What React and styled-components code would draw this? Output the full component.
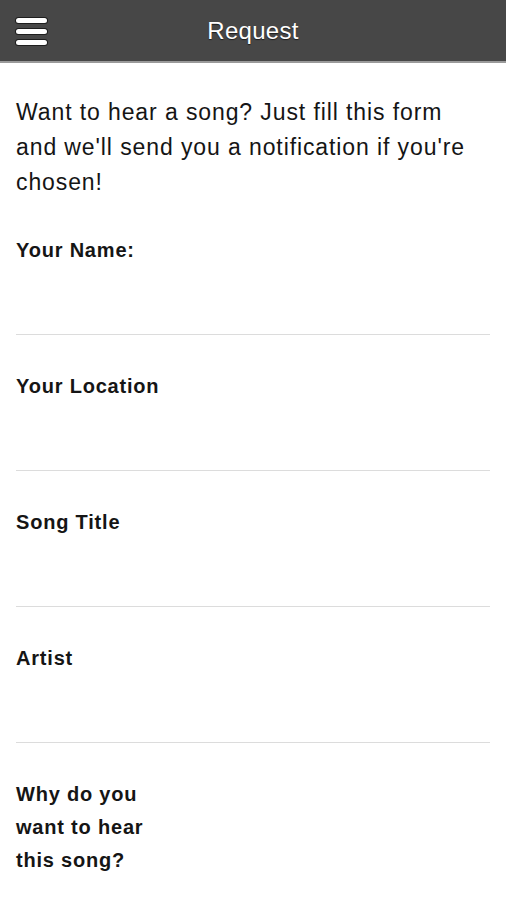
import React from 'react';
import styled, { createGlobalStyle } from 'styled-components';

const GlobalStyle = createGlobalStyle`
  html, body {
    margin: 0;
    padding: 0;
    background: #ffffff;
  }
  body {
    font-family: "Liberation Sans", Arial, sans-serif;
    color: #151515;
  }
`;

const Page = styled.div`
  width: 506px;
  min-height: 900px;
  background: #ffffff;
`;

const Header = styled.header`
  height: 61px;
  background: #474747;
  border-bottom: 2px solid #9a9a9a;
  display: flex;
  align-items: center;
  justify-content: center;
  position: relative;
`;

const MenuButton = styled.button`
  position: absolute;
  left: 16px;
  top: 18px;
  width: 31px;
  height: 27px;
  padding: 0;
  border: none;
  background: transparent;
  display: flex;
  flex-direction: column;
  justify-content: space-between;
`;

const Bar = styled.span`
  display: block;
  height: 5px;
  border-radius: 3px;
  background: #ffffff;
  box-shadow: 0 0 0 1px #1e1e1e;
`;

const Title = styled.h1`
  margin: 0;
  color: #ffffff;
  font-size: 24px;
  font-weight: normal;
  letter-spacing: 0.3px;
  text-shadow: 0 1px 1px rgba(0, 0, 0, 0.6);
`;

const Content = styled.main`
  padding: 32px 16px 0;
`;

const Intro = styled.p`
  margin: 0 0 34px;
  font-size: 23px;
  letter-spacing: 0.9px;
  line-height: 35px;
  color: #151515;
`;

const Field = styled.div`
  border-bottom: 1px solid #dcdcdc;
  margin-bottom: 35px;
`;

const Label = styled.label`
  display: block;
  font-size: 20px;
  font-weight: bold;
  letter-spacing: 0.8px;
  line-height: 33px;
  color: #151515;
  max-width: ${(p) => (p.narrow ? '150px' : 'none')};
`;

const Input = styled.input`
  display: block;
  width: 100%;
  height: 67px;
  border: none;
  outline: none;
  padding: 0;
  background: transparent;
  font-family: inherit;
  font-size: 20px;
`;

const fields = ['Your Name:', 'Your Location', 'Song Title', 'Artist'];

const App = () => {
  return (
    <Page>
      <GlobalStyle />
      <Header>
        <MenuButton aria-label="Menu">
          <Bar />
          <Bar />
          <Bar />
        </MenuButton>
        <Title>Request</Title>
      </Header>
      <Content>
        <Intro>
          Want to hear a song? Just fill this form and we'll send you a notification if you're chosen!
        </Intro>
        {fields.map((f) => (
          <Field key={f}>
            <Label>{f}</Label>
            <Input />
          </Field>
        ))}
        <Label narrow>Why do you want to hear this song?</Label>
      </Content>
    </Page>
  );
};

export default App;
